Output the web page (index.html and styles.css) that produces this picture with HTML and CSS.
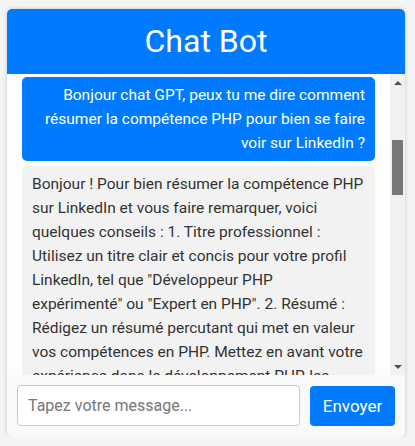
FILE: index.html
```html
<!DOCTYPE html>
<html lang="fr">
<head>
<meta charset="utf-8">
<title>Chat Bot</title>
<link rel="stylesheet" href="styles.css">
</head>
<body>
<div class="chat">
  <div class="chat-header">Chat Bot</div>
  <div class="chat-body">
    <div class="chat-messages">
      <div class="msg user">Bonjour chat GPT, peux tu me dire comment résumer la compétence PHP pour bien se faire voir sur LinkedIn ?</div>
      <div class="msg bot">Bonjour ! Pour bien résumer la compétence PHP sur LinkedIn et vous faire remarquer, voici quelques conseils : 1. Titre professionnel : Utilisez un titre clair et concis pour votre profil LinkedIn, tel que "Développeur PHP expérimenté" ou "Expert en PHP". 2. Résumé : Rédigez un résumé percutant qui met en valeur vos compétences en PHP. Mettez en avant votre expérience dans le développement PHP, les projets sur lesquels vous avez travaillé et les résultats que vous avez obtenus.</div>
    </div>
    <div class="scrollbar" aria-hidden="true">
      <div class="sb-btn"><span class="sb-arrow up"></span></div>
      <div class="sb-track"><div class="sb-thumb"></div></div>
      <div class="sb-btn"><span class="sb-arrow down"></span></div>
    </div>
  </div>
  <form class="chat-input" onsubmit="return false;">
    <input class="chat-field" type="text" placeholder="Tapez votre message...">
    <button class="chat-send" type="submit">Envoyer</button>
  </form>
</div>
</body>
</html>
```

FILE: styles.css
```css
* { box-sizing: border-box; }
html, body { margin: 0; }
body {
  background: #f4f4f4;
  font-family: Roboto, "Liberation Sans", sans-serif;
  padding: 9px 0 0 7px;
}
.chat {
  width: 398px;
  height: 428px;
  background: #fff;
  border-radius: 5px;
  box-shadow: 0 0 4px rgba(0,0,0,0.18);
  display: flex;
  flex-direction: column;
  overflow: hidden;
}
.chat-header {
  background: #007bff;
  color: #fff;
  height: 65px;
  flex: none;
  display: flex;
  align-items: center;
  justify-content: center;
  font-size: 32px;
  padding-bottom: 2px;
}
.chat-body {
  height: 301px;
  flex: none;
  display: flex;
  background: #fdfdfd;
}
.chat-messages {
  flex: 1;
  min-width: 0;
  overflow: hidden;
  padding: 3px 15px 0;
  display: flex;
  flex-direction: column;
  gap: 5px;
}
.scrollbar {
  width: 15px;
  flex: none;
  background: #f1f1f1;
  display: flex;
  flex-direction: column;
}
.sb-btn {
  height: 17px;
  flex: none;
  display: flex;
  align-items: center;
  justify-content: center;
}
.sb-arrow {
  width: 0;
  height: 0;
  border-left: 4px solid transparent;
  border-right: 4px solid transparent;
}
.sb-arrow.up { border-bottom: 4px solid #505050; }
.sb-arrow.down { border-top: 4px solid #505050; }
.sb-track {
  flex: 1;
  padding: 49px 2px 0;
}
.sb-thumb {
  height: 55px;
  background: #787878;
}
.msg {
  padding: 6px 10px;
  border-radius: 5px;
  font-size: 15.5px;
  line-height: 24px;
  flex: none;
}
.msg.user {
  background: #007bff;
  color: #fff;
  text-align: right;
}
.msg.bot {
  background: #f2f2f2;
  color: #333;
}
.chat-input {
  flex: none;
  height: 62px;
  background: #f9f9f9;
  display: flex;
  gap: 10px;
  padding: 10px 10px 11px;
  margin: 0;
}
.chat-field {
  flex: 1;
  min-width: 0;
  border: 1px solid #ccc;
  border-radius: 4px;
  padding: 0 10px;
  font-family: inherit;
  font-size: 16px;
  color: #333;
  background: #fff;
}
.chat-field::placeholder { color: #777; }
.chat-send {
  width: 85px;
  border: none;
  border-radius: 4px;
  background: #007bff;
  color: #fff;
  font-family: inherit;
  font-size: 17px;
  margin-top: 1px;
}
```
